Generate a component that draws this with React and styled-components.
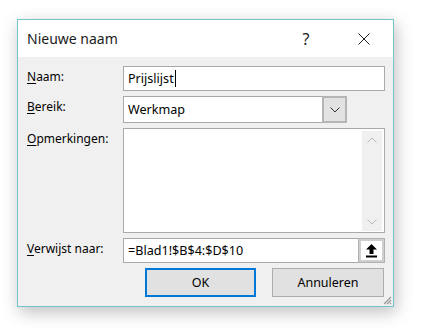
import styled, { createGlobalStyle } from "styled-components";

const GlobalStyle = createGlobalStyle`
  body {
    margin: 0;
    background: #fff;
    font-family: "Noto Sans", "Open Sans", sans-serif;
  }
`;

const Page = styled.div`
  padding: 19px 0 0 17px;
  height: 335px;
  box-sizing: border-box;
`;

const Dialog = styled.div`
  width: 377px;
  box-sizing: border-box;
  border: 1px solid #74c5cb;
  background: #f0f0f0;
  box-shadow: 2px 5px 16px rgba(0, 0, 0, 0.26);
`;

const TitleBar = styled.div`
  height: 37px;
  display: flex;
  align-items: center;
  background: #fff;
  padding-left: 9px;
`;

const Title = styled.div`
  flex: 1;
  font-size: 14px;
  color: #1b1b1b;
`;

const HelpButton = styled.div`
  width: 46px;
  text-align: center;
  font-size: 16px;
  color: #222;
`;

const CloseButton = styled.div`
  display: flex;
  align-items: center;
  margin: 0 23px 0 29px;
  height: 12px;
`;

const Body = styled.div`
  position: relative;
  display: grid;
  grid-template-columns: 96px 1fr;
  row-gap: 5px;
  padding: 9px 8px 9px 9px;
`;

const Label = styled.div`
  font-size: 12px;
  line-height: 16px;
  padding-top: 3px;
  color: #000;
  white-space: nowrap;
  u {
    text-decoration-thickness: 1px;
    text-underline-offset: 2px;
  }
`;

const Field = styled.div`
  height: ${(p) => p.$h}px;
  width: ${(p) => (p.$w ? `${p.$w}px` : "auto")};
  box-sizing: border-box;
  display: flex;
  align-items: ${(p) => (p.$top ? "stretch" : "center")};
  background: #fff;
  border: 1px solid #a9a9a9;
  font-size: 12.6px;
  color: #000;
`;

const FieldText = styled.div`
  flex: 1;
  padding-left: 4px;
  display: flex;
  align-items: center;
`;

const Caret = styled.span`
  display: inline-block;
  width: 1px;
  height: 17px;
  background: #000;
  margin-left: 1px;
`;

const ComboButton = styled.div`
  align-self: stretch;
  width: 21px;
  margin: -1px -1px -1px 0;
  display: flex;
  align-items: center;
  justify-content: center;
  background: #e2e2e2;
  border: 2px solid #b5b5b5;
`;

const Scrollbar = styled.div`
  margin: 2px 2px 1px auto;
  width: 20px;
  display: flex;
  flex-direction: column;
  justify-content: space-between;
  align-items: center;
  padding: 6px 0;
  background: #f0f0f0;
`;

const RefButton = styled.div`
  align-self: stretch;
  width: 27px;
  margin: -1px -1px -1px 0;
  box-sizing: border-box;
  display: flex;
  align-items: center;
  justify-content: center;
  background: #fff;
  border: 3px solid #cfcfcf;
  outline: 1px solid #b1b1b1;
  outline-offset: -1px;
`;

const ButtonRow = styled.div`
  grid-column: 1 / -1;
  display: flex;
  justify-content: flex-end;
  gap: 16px;
  padding-right: 1px;
`;

const Button = styled.div`
  width: ${(p) => p.$w}px;
  height: 29px;
  box-sizing: border-box;
  display: flex;
  align-items: center;
  justify-content: center;
  background: #e1e1e1;
  border: ${(p) => (p.$primary ? "2px solid #0078d7" : "1px solid #adadad")};
  font-size: 12.5px;
  color: #000;
`;

const Grip = styled.svg`
  position: absolute;
  right: 1px;
  bottom: 1px;
`;

const Chevron = ({ up, color }) => (
  <svg width="10" height="6" viewBox="0 0 10 6">
    <polyline
      points={up ? "0.5,5.5 5,1 9.5,5.5" : "0.5,0.5 5,5 9.5,0.5"}
      fill="none"
      stroke={color}
      strokeWidth="1"
    />
  </svg>
);

export default function App() {
  return (
    <Page>
      <GlobalStyle />
      <Dialog>
        <TitleBar>
          <Title>Nieuwe naam</Title>
          <HelpButton>?</HelpButton>
          <CloseButton>
            <svg width="12" height="12" viewBox="0 0 12 12">
              <path d="M0.5 0.5 L11.5 11.5 M11.5 0.5 L0.5 11.5" stroke="#222" strokeWidth="1" />
            </svg>
          </CloseButton>
        </TitleBar>
        <Body>
          <Label><u>N</u>aam:</Label>
          <Field $h={25}>
            <FieldText>Prijslijst<Caret /></FieldText>
          </Field>

          <Label><u>B</u>ereik:</Label>
          <Field $h={27} $w={224}>
            <FieldText>Werkmap</FieldText>
            <ComboButton>
              <Chevron color="#333" />
            </ComboButton>
          </Field>

          <Label><u>O</u>pmerkingen:</Label>
          <Field $h={105} $top>
            <Scrollbar>
              <Chevron up color="#b9b9b9" />
              <Chevron color="#b9b9b9" />
            </Scrollbar>
          </Field>

          <Label><u>V</u>erwijst naar:</Label>
          <Field $h={25}>
            <FieldText>=Blad1!$B$4:$D$10</FieldText>
            <RefButton>
              <svg width="11" height="14" viewBox="0 0 11 14">
                <path d="M5.5 0 L11 5.5 H7.5 V10 H3.5 V5.5 H0 Z" fill="#000" />
                <rect x="0" y="11.5" width="11" height="2" fill="#000" />
              </svg>
            </RefButton>
          </Field>

          <ButtonRow>
            <Button $w={111} $primary>OK</Button>
            <Button $w={112}>Annuleren</Button>
          </ButtonRow>
          <Grip width="10" height="10" viewBox="0 0 10 10">
            <path d="M9 2 L2 9 M9 5 L5 9 M9 8 L8 9" stroke="#9a9a9a" strokeWidth="1.2" />
          </Grip>
        </Body>
      </Dialog>
    </Page>
  );
}
